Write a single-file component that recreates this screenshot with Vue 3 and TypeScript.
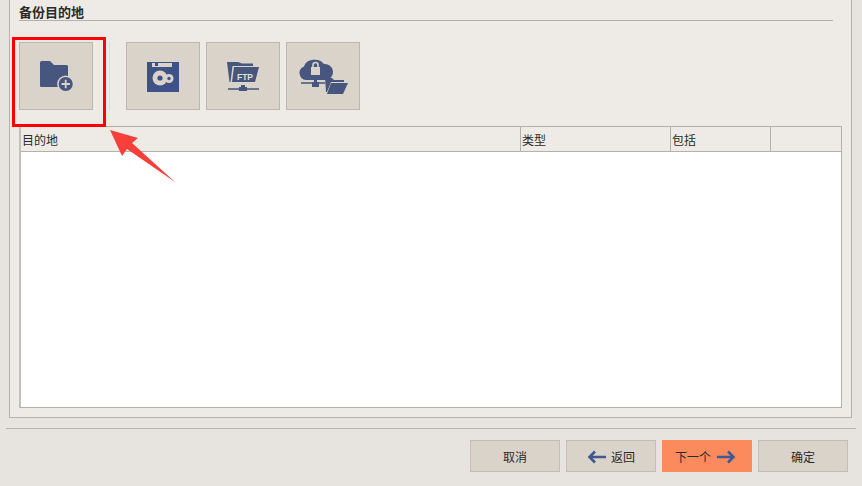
<script setup lang="ts">
// Backup destination step of the wizard
const columns = [
  { label: '目的地', width: 500 },
  { label: '类型', width: 150 },
  { label: '包括', width: 100 },
]
</script>

<template>
  <div class="page">
    <section class="panel">
      <h2 class="title">备份目的地</h2>

      <div class="toolbar">
        <button class="tool first">
          <svg width="36" height="34" viewBox="0 0 36 34">
            <path d="M2 3.500Q2 2 3.500 2H12L16 6H28.500Q30 6 30 7.500V27Q30 28 28.500 28H3.500Q2 28 2 27Z" fill="#46567f" />
            <circle cx="27.700" cy="25" r="7.800" fill="#46567f" stroke="#dad3ca" stroke-width="1.500" />
            <path d="M23.500 25H32M27.700 20.800V29.200" stroke="#dad3ca" stroke-width="1.800" />
          </svg>
        </button>
        <span class="divider"></span>
        <button class="tool">
          <svg width="34" height="34" viewBox="0 0 34 34">
            <path d="M1 3H33V33H1Z" fill="#3f5287" />
            <path d="M6 4H26V8H6Z" fill="#dad3ca" />
            <path d="M9 4H12V7H9Z" fill="#3f5287" />
            <circle cx="14" cy="19" r="7.500" fill="#dad3ca" />
            <circle cx="23" cy="19.500" r="4.500" fill="#dad3ca" />
            <circle cx="14" cy="19" r="2.600" fill="#3f5287" />
            <circle cx="23" cy="19.500" r="1.700" fill="#3f5287" />
          </svg>
        </button>
        <button class="tool">
          <svg width="36" height="36" viewBox="0 0 36 36">
            <path d="M2 4H13L17 5.500H28V8H7.500L5.500 24H4.500Z" fill="#46567f" />
            <path d="M9 9H34L30 24H7Z" fill="#46567f" />
            <text x="20" y="22" class="ftp">FTP</text>
            <path d="M3 31H14M22 31H34" stroke="#46567f" stroke-width="1.300" />
            <path d="M16 27H20V29H22V33H14V29H16Z" fill="#46567f" />
          </svg>
        </button>
        <button class="tool">
          <svg width="50" height="38" viewBox="0 0 50 38">
            <path d="M8 23A7 7 0 0 1 6 9.500A11 9 0 0 1 26 7A8 8 0 0 1 28 23Z" fill="#46567f" />
            <path d="M13 10H22V18H13Z" fill="#dad3ca" />
            <path d="M15 10V8A2.500 2.500 0 0 1 20 8V10" fill="none" stroke="#dad3ca" stroke-width="1.600" />
            <path d="M3 26H15M20 26H27" stroke="#46567f" stroke-width="1.300" />
            <path d="M16 23H19V25H21V30H14V25H16Z" fill="#46567f" />
            <path d="M27 21H34L36 23H46V25H33L29 35H28Z" fill="#46567f" />
            <path d="M33 26H50L45 37H29Z" fill="#46567f" />
          </svg>
        </button>
      </div>

      <div class="table">
        <div class="table-head">
          <div v-for="col in columns" :key="col.label" class="head-cell" :style="{ width: col.width + 'px' }">
            {{ col.label }}
          </div>
        </div>
        <div class="table-body"></div>
      </div>
    </section>

    <hr class="rule" />

    <footer class="actions">
      <button class="action">取消</button>
      <button class="action">
        <svg width="20" height="14" viewBox="0 0 20 14">
          <path d="M19 7H3M8 1.500L2.500 7L8 12.500" fill="none" stroke="#42598f" stroke-width="2.600" />
        </svg>
        返回
      </button>
      <button class="action primary">
        下一个
        <svg width="20" height="14" viewBox="0 0 20 14">
          <path d="M1 7H17M12 1.500L17.500 7L12 12.500" fill="none" stroke="#42598f" stroke-width="2.600" />
        </svg>
      </button>
      <button class="action">确定</button>
    </footer>

    <!-- annotation drawn over the screenshot -->
    <div class="highlight"></div>
    <svg class="pointer" width="72" height="60" viewBox="0 0 72 60">
      <path d="M1 1L29 9L23 14L66 53L18 20L13 27Z" fill="#f8403a" />
    </svg>
  </div>
</template>

<style scoped>
.page {
  position: relative;
  width: 862px;
  height: 486px;
  overflow: hidden;
  background: #e7e3de;
  font-family: "Noto Sans CJK SC", "Liberation Sans", sans-serif;
  color: #2b2a28;
  font-size: 12px;
}

.panel {
  box-sizing: border-box;
  width: 843px;
  height: 418px;
  margin-left: 9px;
  padding: 4px 9px 0 9px;
  background: #eeebe6;
  border: 1px solid #b7b3ac;
  border-top: none;
}

.title {
  width: 814px;
  height: 16px;
  margin: 0;
  border-bottom: 1px solid #b5b1aa;
  font-size: 13px;
  line-height: 15px;
  font-weight: 700;
}

.toolbar {
  display: flex;
  align-items: center;
  margin-top: 21px;
  gap: 6px;
}

.tool {
  display: flex;
  align-items: center;
  justify-content: center;
  box-sizing: border-box;
  width: 74px;
  height: 68px;
  padding: 0;
  background: #dad3ca;
  border: 1px solid #bdb7ae;
}

.divider {
  width: 1px;
  height: 68px;
  margin: 0 10px;
  background: #dfdcd6;
}

.table {
  box-sizing: border-box;
  width: 823px;
  height: 282px;
  margin-top: 16px;
  border: 1px solid #b5b1aa;
  border-left: 2px solid #c4c0b9;
  display: flex;
  flex-direction: column;
}

.table-head {
  display: flex;
  height: 25px;
  flex: none;
  box-sizing: border-box;
  border-bottom: 1px solid #b5b1aa;
}

.head-cell {
  box-sizing: border-box;
  padding-left: 1px;
  border-right: 1px solid #b5b1aa;
  line-height: 26px;
  font-size: 12px;
}

.table-body {
  flex: 1;
  background: #fff;
}

.rule {
  width: 850px;
  height: 1px;
  margin: 10px 0 0 6px;
  border: none;
  background: #b9b5ae;
}

.actions {
  display: flex;
  justify-content: flex-end;
  gap: 6px;
  margin-top: 11px;
  padding-right: 14px;
}

.action {
  display: flex;
  align-items: center;
  justify-content: center;
  gap: 4px;
  box-sizing: border-box;
  width: 90px;
  height: 32px;
  padding: 1px 0 0;
  background: #dad3ca;
  border: 1px solid #c2bdb5;
  font-family: inherit;
  font-size: 12px;
  color: #2b2a28;
}

.primary {
  gap: 5px;
  padding-right: 3px;
  background: #fb8a5c;
  border-color: #fb8a5c;
}

.ftp {
  font-family: "Liberation Sans", sans-serif;
  font-size: 8.500px;
  font-weight: 700;
  fill: #e4ded6;
  text-anchor: middle;
}

.highlight {
  position: absolute;
  left: 12px;
  top: 37px;
  width: 94px;
  height: 90px;
  box-sizing: border-box;
  border: 3px solid #f00;
}

.pointer {
  position: absolute;
  left: 109px;
  top: 129px;
}
</style>
